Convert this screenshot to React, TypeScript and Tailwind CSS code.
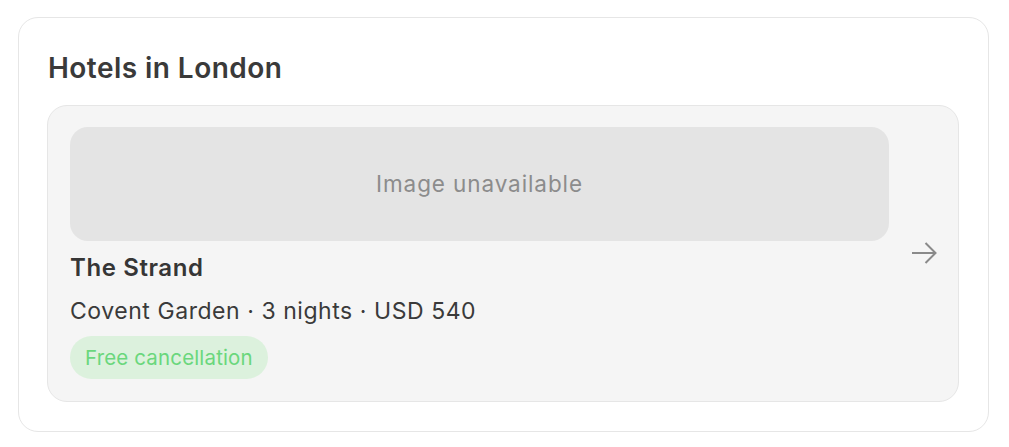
export default function App() {
  return (
    <div className="min-h-screen bg-white pl-[18px] pr-[20px] pt-[17px] pb-[16px] font-['Inter',sans-serif]">
      <div className="rounded-[20px] border border-[#e6e6e6] bg-white pl-[28px] pr-[29px] pt-[33px] pb-[29px]">
        <h2 className="pl-px text-[28px] leading-[34px] font-semibold text-[#3a3a3a] tracking-[0.45px]">
          Hotels in London
        </h2>
        <div className="mt-[20px] flex items-center gap-[22px] rounded-[20px] border border-[#e6e6e6] bg-[#f5f5f5] pl-[22px] pr-[21px] pt-[21px] pb-[22px]">
          <div className="flex-1">
            <div className="flex h-[114px] items-center justify-center rounded-[18px] bg-[#e4e4e4]">
              <span className="text-[22.5px] tracking-[0.9px] text-[#8c8c8c]">Image unavailable</span>
            </div>
            <div className="mt-[12px] text-[24px] leading-[30px] font-semibold tracking-[0.6px] text-[#363636]">
              The Strand
            </div>
            <div className="mt-[13px] text-[23px] leading-[30px] tracking-[0.55px] text-[#3a3a3a]">
              Covent Garden · 3 nights · USD 540
            </div>
            <span className="mt-[10px] inline-block rounded-full bg-[#dcf1dd] px-[15px] py-[8px] text-[20.5px] leading-[27px] tracking-[0.15px] text-[#6ad77c]">
              Free cancellation
            </span>
          </div>
          <svg
            width="26"
            height="24"
            viewBox="0 0 26 24"
            fill="none"
            stroke="#8a8a8a"
            strokeWidth="2"
            className="shrink-0"
          >
            <path d="M1 12h23" />
            <path d="M14.5 2l10 10-10 10" />
          </svg>
        </div>
      </div>
    </div>
  );
}
